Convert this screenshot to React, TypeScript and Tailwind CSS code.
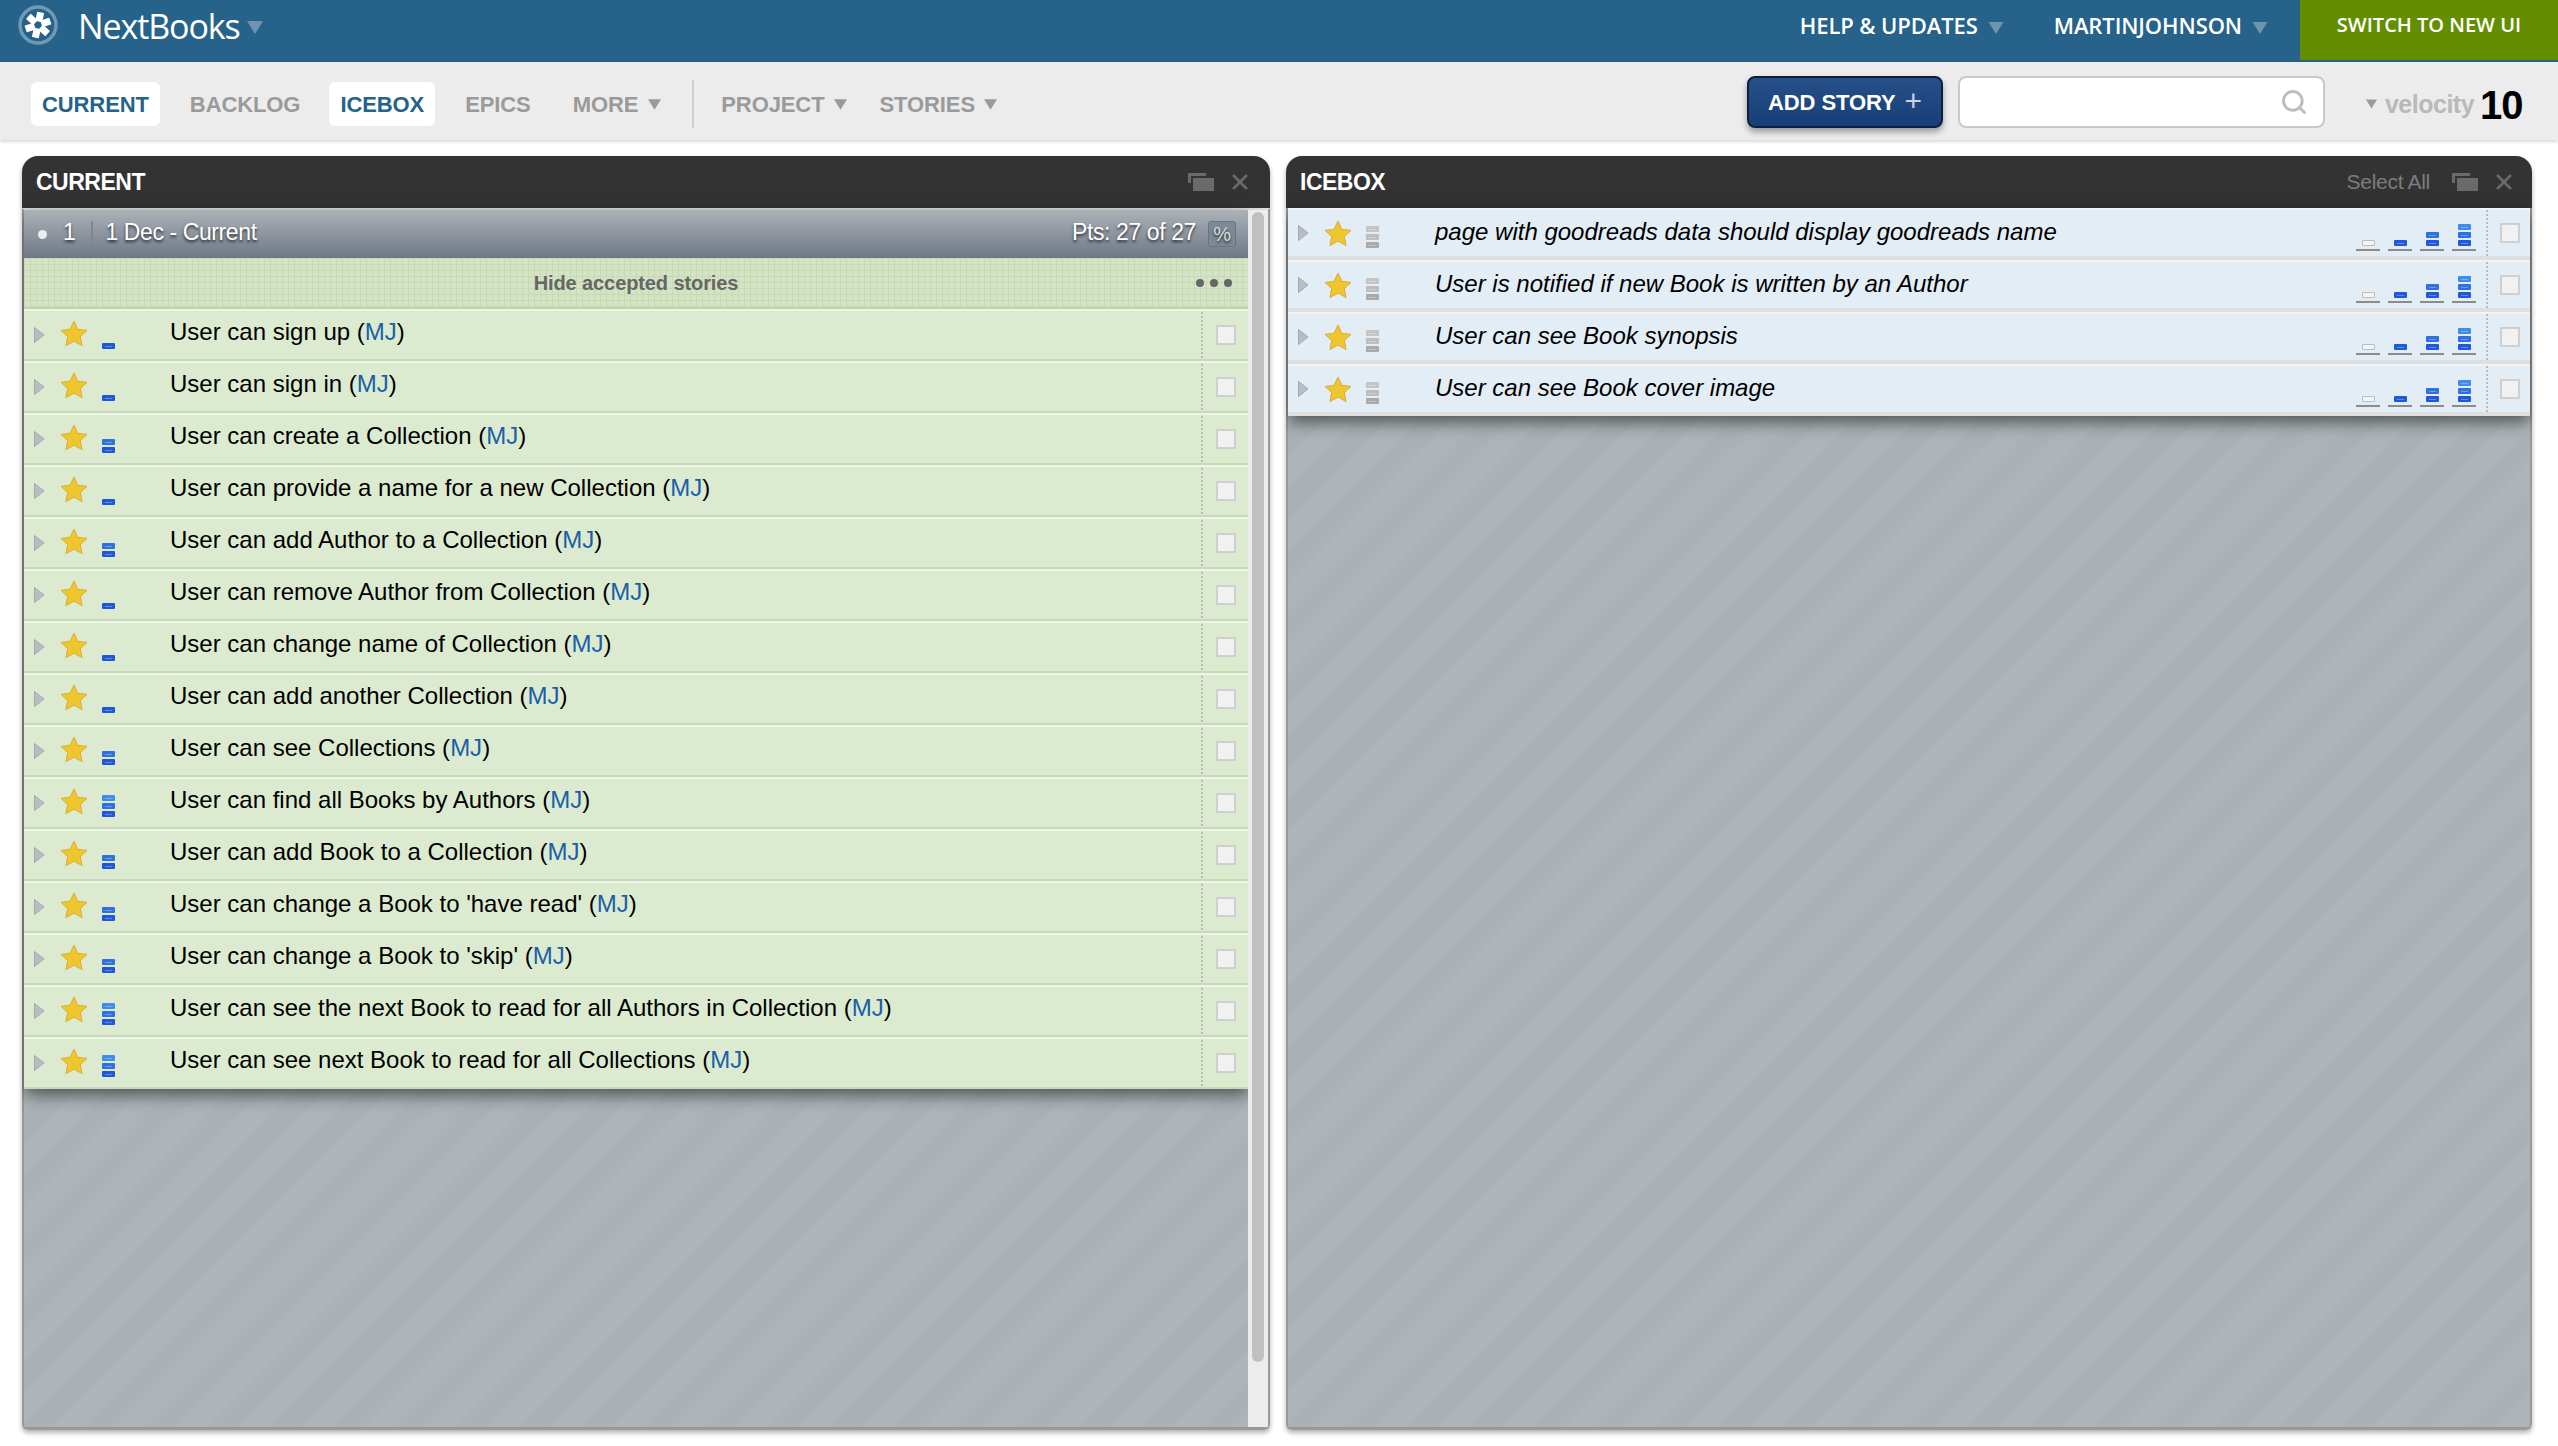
import { Search } from "lucide-react"

const currentStories = [
  { title: "User can sign up", points: 1 },
  { title: "User can sign in", points: 1 },
  { title: "User can create a Collection", points: 2 },
  { title: "User can provide a name for a new Collection", points: 1 },
  { title: "User can add Author to a Collection", points: 2 },
  { title: "User can remove Author from Collection", points: 1 },
  { title: "User can change name of Collection", points: 1 },
  { title: "User can add another Collection", points: 1 },
  { title: "User can see Collections", points: 2 },
  { title: "User can find all Books by Authors", points: 3 },
  { title: "User can add Book to a Collection", points: 2 },
  { title: "User can change a Book to 'have read'", points: 2 },
  { title: "User can change a Book to 'skip'", points: 2 },
  { title: "User can see the next Book to read for all Authors in Collection", points: 3 },
  { title: "User can see next Book to read for all Collections", points: 3 },
]

const iceboxStories = [
  "page with goodreads data should display goodreads name",
  "User is notified if new Book is written by an Author",
  "User can see Book synopsis",
  "User can see Book cover image",
]

function Caret({ className }: { className: string }) {
  return (
    <svg viewBox="0 0 10 8" className={className}>
      <path d="M0 0h10L5 8z" fill="currentColor" />
    </svg>
  )
}

function Logo() {
  return (
    <svg viewBox="0 0 40 40" className="w-[40px] h-[40px] shrink-0">
      <circle cx="20" cy="20" r="18" fill="none" stroke="#6f9ab5" strokeWidth="3.500" />
      <g fill="#fff">
        {[0, 60, 120, 180, 240, 300].map((r) => (
          <rect key={r} x="16.500" y="7" width="7" height="9.500" rx="0.500" transform={`rotate(${r + 12} 20 20)`} />
        ))}
      </g>
    </svg>
  )
}

function Star() {
  return (
    <svg viewBox="0 0 28 27" className="w-[28px] h-[27px] shrink-0">
      <path
        d="M14 1l3.9 8.3 9.1 1.1-6.7 6.2 1.8 9L14 21.2 5.900 25.600l1.800-9L1 10.400l9.100-1.100z"
        fill="#f0c62f"
        stroke="#d9ad3c"
        strokeWidth="1"
      />
    </svg>
  )
}

function Arrow() {
  return (
    <svg viewBox="0 0 10 16" className="w-[10px] h-[16px] shrink-0">
      <path d="M0.5 0.500L10 8 0.500 15.500z" fill="#b9bcc0" stroke="#a5a8ac" strokeWidth="1" />
    </svg>
  )
}

// stacked estimate blocks, bottom one first
function Blocks({ count, gray }: { count: number; gray?: boolean }) {
  const colors = gray ? ["bg-[#a9a9a9]", "bg-[#bdbdbd]", "bg-[#c4c4c4]"] : ["bg-[#1f58d8]", "bg-[#2f70e2]", "bg-[#3f8cee]"]
  return (
    <div className="flex flex-col-reverse gap-[2px] w-[13px]">
      {colors.slice(0, count).map((c) => (
        <div key={c} className={`h-[6px] rounded-[1px] ${c} flex items-center justify-center`}>
          <div className="w-[7px] h-[1px] bg-white/30" />
        </div>
      ))}
    </div>
  )
}

function Checkbox() {
  return <div className="w-[20px] h-[20px] border-[2px] border-[#cfcfcf] bg-[#f1f1f1] shrink-0" />
}

function Separator() {
  return <div className="w-0 h-[46px] border-l-[2px] border-dotted border-[#b9b9b9] shrink-0" />
}

function StoryRow({ title, points }: { title: string; points: number }) {
  return (
    <div className="flex items-center h-[52px] bg-[#dcebd0] border-t-[2px] border-t-[#edf5e5] border-b-[2px] border-b-[#c9d8bb]">
      <div className="ml-[10px] w-[26px] flex"><Arrow /></div>
      <div className="mb-[3px]"><Star /></div>
      <div className="ml-[14px] w-[13px] h-full flex flex-col justify-end pb-[10px]"><Blocks count={points} /></div>
      <div className="ml-[55px] flex-1 text-[24px] leading-[30px] text-black mb-[7px]">
        {title} (<span className="text-[#1a5fa8]">MJ</span>)
      </div>
      <Separator />
      <div className="ml-[13px] mr-[12px]"><Checkbox /></div>
    </div>
  )
}

function IceboxRow({ title }: { title: string }) {
  return (
    <div className="flex items-center h-[52px] bg-[#e2edf6] border-t-[2px] border-t-[#eef4f9] border-b-[4px] border-b-[#dedede]">
      <div className="ml-[10px] w-[26px] flex"><Arrow /></div>
      <Star />
      <div className="ml-[14px] w-[13px] h-full flex flex-col justify-end pb-[8px]"><Blocks count={3} gray /></div>
      <div className="ml-[56px] flex-1 text-[24px] leading-[30px] italic text-black mb-[3px]">{title}</div>
      <div className="flex items-end gap-[8px] h-full pb-[5px] mr-[10px]">
        {[0, 1, 2, 3].map((n) => (
          <div key={n} className="w-[24px] flex flex-col items-center gap-[3px]">
            {n === 0 ? (
              <div className="w-[13px] h-[6px] bg-[#f4f4f4] border border-[#bdbdbd] rounded-[1px]" />
            ) : (
              <Blocks count={n} />
            )}
            <div className="w-full h-[2px] bg-[#8c8c8c]" />
          </div>
        ))}
      </div>
      <Separator />
      <div className="ml-[12px] mr-[10px]"><Checkbox /></div>
    </div>
  )
}

function PanelIcons() {
  return (
    <div className="flex items-center gap-[18px]">
      <svg viewBox="0 0 26 18" className="w-[26px] h-[18px]">
        <path d="M0 0h18v3H3v7H0z" fill="#6a6a6a" />
        <rect x="5" y="5" width="21" height="13" fill="#6a6a6a" />
      </svg>
      <svg viewBox="0 0 16 16" className="w-[16px] h-[16px]">
        <path d="M1 1l14 14M15 1L1 15" stroke="#6a6a6a" strokeWidth="2.500" />
      </svg>
    </div>
  )
}

const stripes =
  "bg-[repeating-linear-gradient(135deg,#aeb5b8_0px,#aeb5b8_22px,#abb2b5_22px,#abb2b5_44px)]"

export default function App() {
  return (
    <div className="w-[2558px] h-[1446px] bg-white overflow-hidden font-['Liberation_Sans',Arial,sans-serif]">
      {/* top bar */}
      <div className="h-[62px] bg-[#266289] flex items-start text-white font-['Open_Sans',sans-serif]">
        <div className="flex items-center h-full pl-[18px]">
          <div className="mb-[12px]"><Logo /></div>
          <span className="ml-[20px] mb-[9px] text-[34px] tracking-[-1.100px]">NextBooks</span>
          <Caret className="ml-[7px] mt-[-8px] w-[16px] h-[13px] text-[#6f94ad]" />
        </div>
        <div className="ml-auto flex items-center h-full font-semibold text-[22px] tracking-[-0.1px]">
          <span className="mb-[12px]">HELP &amp; UPDATES</span>
          <Caret className="ml-[10px] mt-[-6px] w-[16px] h-[12px] text-[#6f94ad]" />
          <span className="ml-[50px] mb-[12px]">MARTINJOHNSON</span>
          <Caret className="ml-[10px] mt-[-6px] w-[16px] h-[12px] text-[#6f94ad]" />
        </div>
        <div className="ml-[32px] w-[258px] h-[60px] bg-[#638e00] flex items-center justify-center font-semibold text-[20px] pb-[10px]">
          SWITCH TO NEW UI
        </div>
      </div>

      {/* nav */}
      <div className="h-[78px] bg-[#ececec] shadow-[0_2px_3px_rgba(0,0,0,0.15)] relative flex items-center pl-[31px] pt-[6px] text-[22px] font-bold text-[#9a9a9a] tracking-[-0.1px]">
        <span className="h-[44px] px-[11px] rounded-[6px] bg-white text-[#266289] flex items-center">CURRENT</span>
        <span className="ml-[30px]">BACKLOG</span>
        <span className="ml-[29px] h-[44px] px-[11px] rounded-[6px] bg-white text-[#266289] flex items-center">ICEBOX</span>
        <span className="ml-[30px]">EPICS</span>
        <span className="ml-[42px]">MORE</span>
        <Caret className="ml-[10px] w-[13px] h-[11px] text-[#9a9a9a]" />
        <div className="ml-[31px] h-[48px] w-[2px] bg-[#cfcfcf]" />
        <span className="ml-[27px]">PROJECT</span>
        <Caret className="ml-[10px] w-[13px] h-[11px] text-[#9a9a9a]" />
        <span className="ml-[32px]">STORIES</span>
        <Caret className="ml-[9px] w-[13px] h-[11px] text-[#9a9a9a]" />
        <div className="ml-[750px] mt-[-4px] w-[196px] h-[52px] rounded-[8px] border-[2px] border-[#0c1f3d] bg-gradient-to-b from-[#275089] to-[#163f78] shadow-[0_4px_6px_rgba(0,0,0,0.35)] flex items-center justify-center text-white text-[22px]">
          ADD STORY
          <span className="ml-[9px] text-[#c9d3e0] text-[30px] font-normal leading-none mb-[3px]">+</span>
        </div>
        <div className="ml-[15px] mt-[-4px] w-[367px] h-[52px] rounded-[8px] border-[2px] border-[#c9c9c9] bg-white flex items-center justify-end pr-[15px]">
          <Search size={28} strokeWidth={2.500} className="text-[#bcbcbc]" />
        </div>
        <Caret className="ml-[41px] w-[11px] h-[10px] text-[#9a9a9a]" />
        <span className="ml-[8px] text-[25px] text-[#b9b9b9] tracking-[-0.5px] mt-[2px]">velocity</span>
        <span className="ml-[6px] text-[40px] text-black tracking-[-1px] leading-none mt-[2px]">10</span>
      </div>

      {/* panels */}
      <div className="flex gap-[16px] pl-[22px] pr-[26px] pt-[16px] h-[1290px]">
        <div className="w-[1248px] h-[1274px] flex flex-col rounded-t-[16px] rounded-b-[6px] shadow-[0_3px_5px_rgba(0,0,0,0.3)] overflow-hidden">
          <div className="h-[52px] bg-[#333333] flex items-center justify-between pl-[14px] pr-[22px] shrink-0">
            <span className="text-white font-bold text-[23px] tracking-[-0.5px]">CURRENT</span>
            <PanelIcons />
          </div>
          <div className="flex-1 flex min-h-0 border-x-[2px] border-b-[3px] border-x-[#999999] border-b-[#999999] border-t-[2px] border-t-[#dedede]">
            <div className={`flex-1 ${stripes}`}>
              <div className="shadow-[0_6px_16px_rgba(0,0,0,0.55)]">
                <div className="h-[48px] bg-gradient-to-b from-[#adb2b9] to-[#6e7884] flex items-center text-white text-[23px] tracking-[-0.4px] [text-shadow:0_2px_3px_rgba(0,0,0,0.7)]">
                  <div className="ml-[14px] w-[9px] h-[9px] rounded-full bg-[#eeeeee]" />
                  <span className="ml-[16px] mb-[3px]">1</span>
                  <div className="ml-[16px] w-[2px] h-[26px] bg-[#7f8690]" />
                  <span className="ml-[12px] mb-[3px]">1 Dec - Current</span>
                  <span className="ml-auto mb-[3px]">Pts: 27 of 27</span>
                  <span className="ml-[12px] mr-[12px] w-[28px] h-[26px] rounded-[3px] bg-[#7d8996] border border-[#68737f] flex items-center justify-center text-[20px] text-[#d5d9dd]">%</span>
                </div>
                <div className="h-[51px] bg-[#d4e3c3] bg-[linear-gradient(#c8d9b5_1px,transparent_1px),linear-gradient(90deg,#c8d9b5_1px,transparent_1px)] bg-[length:6px_6px] border-b-[2px] border-b-[#c2d2ad] flex items-center justify-center relative text-[20px] font-bold text-[#666666] tracking-[-0.1px]">
                  Hide accepted stories
                  <div className="absolute right-[16px] flex gap-[6px]">
                    <div className="w-[8px] h-[8px] rounded-full bg-[#666666]" />
                    <div className="w-[8px] h-[8px] rounded-full bg-[#666666]" />
                    <div className="w-[8px] h-[8px] rounded-full bg-[#666666]" />
                  </div>
                </div>
                {currentStories.map((s) => (
                  <StoryRow key={s.title} title={s.title} points={s.points} />
                ))}
              </div>
            </div>
            <div className="w-[20px] bg-[#ececec] shrink-0 pt-[2px]">
              <div className="mx-auto w-[12px] h-[1150px] rounded-full bg-[#c0c0c0]" />
            </div>
          </div>
        </div>

        <div className="flex-1 h-[1274px] flex flex-col rounded-t-[16px] rounded-b-[6px] shadow-[0_3px_5px_rgba(0,0,0,0.3)] overflow-hidden">
          <div className="h-[52px] bg-[#333333] flex items-center pl-[14px] pr-[20px] shrink-0">
            <span className="text-white font-bold text-[23px] tracking-[-0.5px]">ICEBOX</span>
            <span className="ml-auto mr-[22px] text-[21px] text-[#7d7d7d] tracking-[-0.3px]">Select All</span>
            <PanelIcons />
          </div>
          <div className={`flex-1 ${stripes} border-x-[2px] border-b-[3px] border-x-[#999999] border-b-[#999999]`}>
            <div className="shadow-[0_6px_16px_rgba(0,0,0,0.55)]">
              {iceboxStories.map((t) => (
                <IceboxRow key={t} title={t} />
              ))}
            </div>
          </div>
        </div>
      </div>
    </div>
  )
}
